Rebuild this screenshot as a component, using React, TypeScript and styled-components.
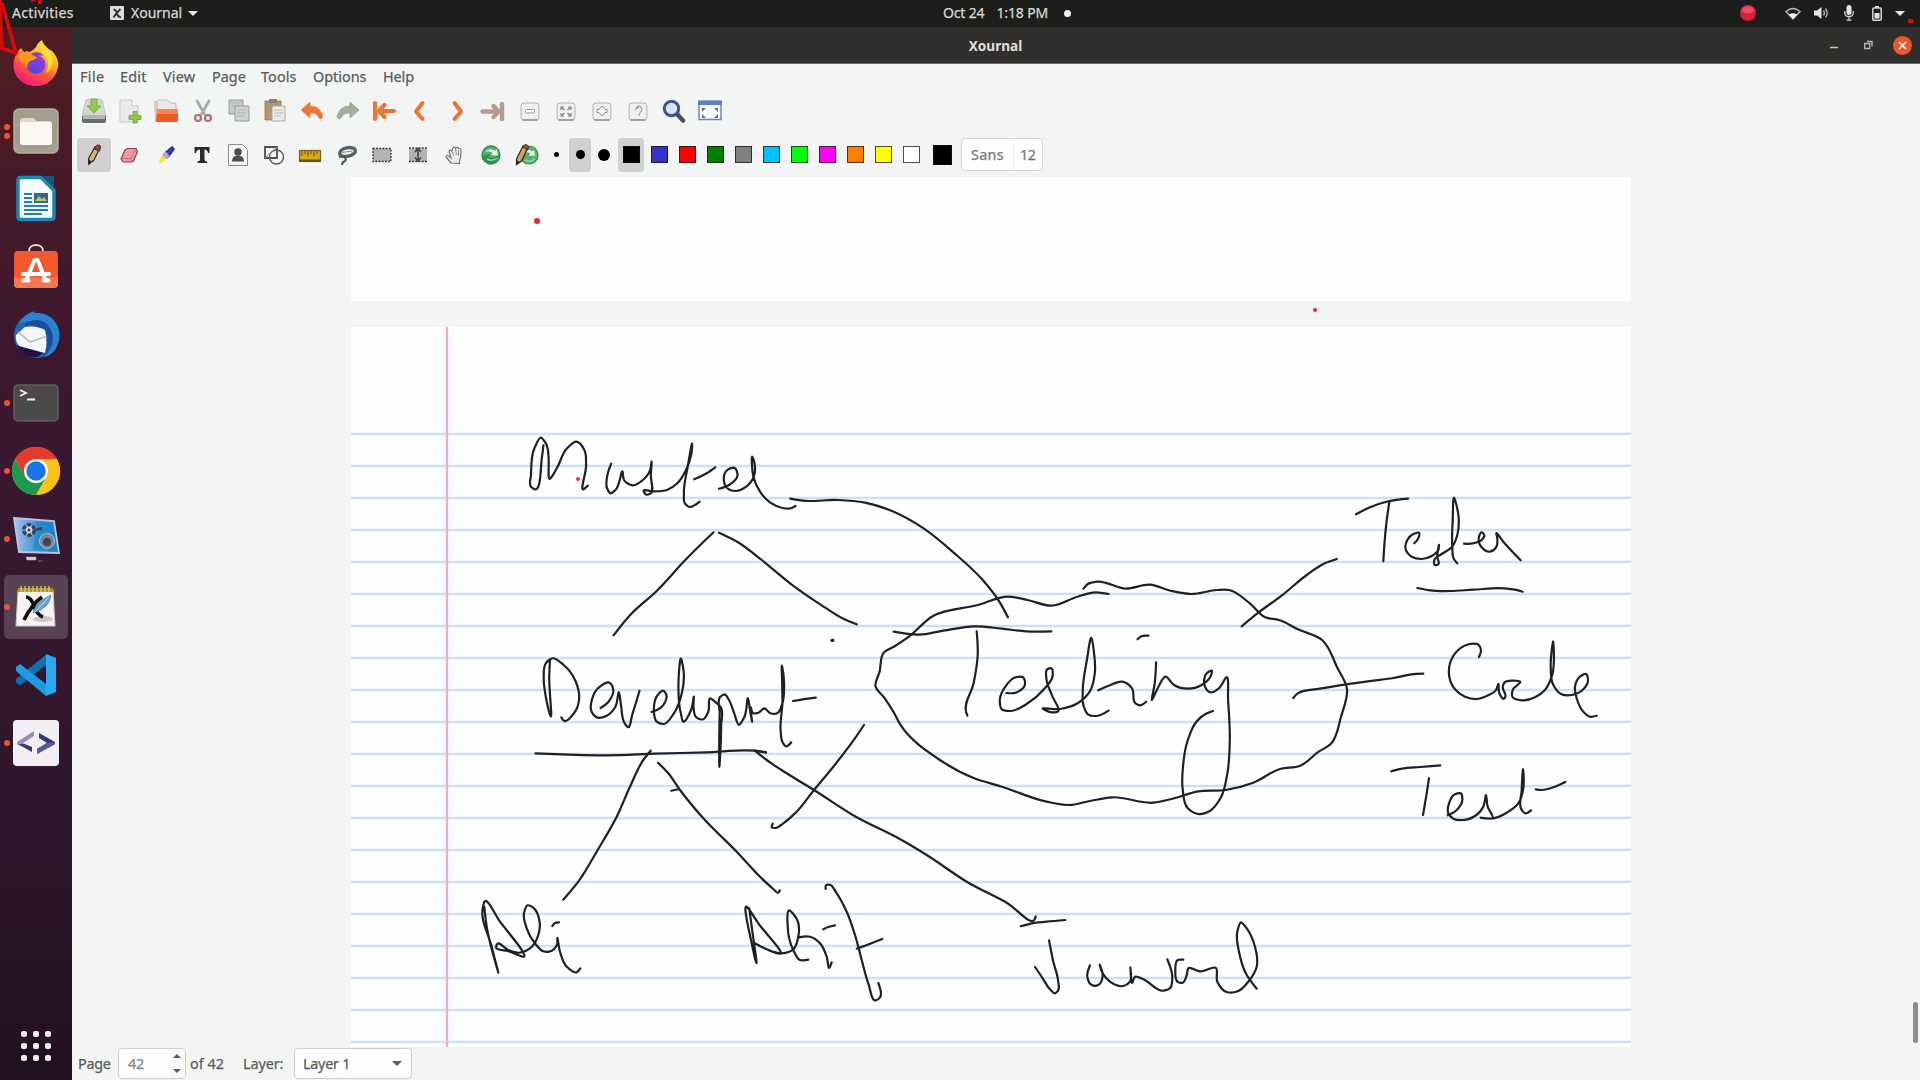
import React from 'react';
import styled, { createGlobalStyle } from 'styled-components';

const Global = createGlobalStyle`
  * { box-sizing: border-box; }
  body { margin: 0; overflow: hidden; background: #f3f5f5; }
  svg { display: block; overflow: visible; }
`;

const Screen = styled.div`
  position: relative;
  width: 1920px;
  height: 1080px;
  display: flex;
  flex-direction: column;
  font-family: "Noto Sans", "Open Sans", sans-serif;
  font-size: 14.4px;
  color: #5b5b5b;
  -webkit-text-stroke: 0.25px currentColor;
  overflow: hidden;
`;

/* ---------- top bar ---------- */
const TopBar = styled.header`
  height: 27px;
  flex: none;
  background: #1d1d1b;
  color: #d8d8d6;
  display: flex;
  align-items: center;
  font-size: 14px;
  line-height: 24px;
  padding-bottom: 1px;
  white-space: pre;
`;
const TopLeft = styled.div`
  width: 943px;
  padding-left: 12px;
  display: flex;
  align-items: center;
`;
const Activities = styled.span`
  width: 98px;
  letter-spacing: 0.35px;
`;
const AppName = styled.span`
  margin: 0 6px 0 7px;
`;
const Clock = styled.div`
  display: flex;
  align-items: center;
  letter-spacing: -0.15px;
`;
const Time = styled.span`
  width: 68px;
  margin-left: 12px;
`;
const Dot = styled.i`
  width: 7px;
  height: 7px;
  border-radius: 50%;
  background: #f2f2f2;
`;
const Tray = styled.div`
  margin-left: auto;
  padding-right: 12px;
  display: flex;
  align-items: center;
`;
const TrayItem = styled.span<{ $w: number }>`
  width: ${p => p.$w}px;
  display: flex;
  justify-content: center;
`;

/* ---------- dock ---------- */
const Body = styled.div`
  flex: 1;
  display: flex;
  min-height: 0;
`;
const DockBar = styled.nav`
  width: 72px;
  flex: none;
  padding-top: 2px;
  background: linear-gradient(#501c22 0%, #45192a 18%, #3a1830 35%, #351830 55%, #2d142c 78%, #22101f 100%);
  display: flex;
  flex-direction: column;
`;
const DockItem = styled.div<{ $active?: boolean }>`
  position: relative;
  width: 64px;
  height: 64px;
  margin: 2px 4px;
  border-radius: 5px;
  display: grid;
  place-items: center;
  background: ${p => (p.$active ? '#5a4255' : 'transparent')};
`;
const Marks = styled.div`
  position: absolute;
  left: 0;
  top: 0;
  bottom: 0;
  display: flex;
  flex-direction: column;
  justify-content: center;
  gap: 3px;
`;
const Mark = styled.i`
  width: 6px;
  height: 6px;
  border-radius: 50%;
  background: #e95530;
`;
const AppGrid = styled.div`
  margin: auto 0 19px 21px;
  display: grid;
  grid-template-columns: repeat(3, 6px);
  gap: 6px;
`;
const GridDot = styled.i`
  height: 6px;
  border-radius: 2px;
  background: #f4eef4;
`;

/* ---------- window ---------- */
const Window = styled.main`
  flex: 1;
  min-width: 0;
  display: flex;
  flex-direction: column;
  background: #f3f5f5;
`;
const TitleBar = styled.div`
  height: 37px;
  flex: none;
  background: #302f2d;
  border-bottom: 1px solid #6c6c6a;
  display: grid;
  grid-template-columns: 1fr auto 1fr;
  align-items: center;
  padding-right: 1px;
  color: #e0dfdd;
  font-weight: 700;
  font-size: 13.6px;
  -webkit-text-stroke: 0;
`;
const WinButtons = styled.div`
  display: flex;
  justify-content: flex-end;
`;
const WinButton = styled.span`
  width: 34px;
  display: flex;
  justify-content: center;
`;
const MenuBar = styled.div`
  height: 25px;
  margin-top: 1px;
  flex: none;
  padding: 0 0 2px 8px;
  display: flex;
  align-items: center;
  line-height: 22px;
`;
const MenuItem = styled.span<{ $w: number; $s?: number }>`
  width: ${p => p.$w}px;
  letter-spacing: ${p => p.$s ?? 0}px;
`;
const Toolbar = styled.div<{ $h: number }>`
  height: ${p => p.$h}px;
  flex: none;
  padding-left: 4px;
  display: flex;
  align-items: center;
`;
const Tool = styled.div<{ $w?: number; $gap?: number; $on?: boolean }>`
  width: ${p => p.$w ?? 36}px;
  height: 34px;
  margin-left: ${p => p.$gap ?? 0}px;
  border: solid transparent;
  border-width: 0 1px;
  border-radius: 4px;
  background: ${p => (p.$on ? '#d0d0d0' : 'transparent')};
  background-clip: padding-box;
  display: flex;
  align-items: center;
  justify-content: center;
`;
const PenDot = styled.i<{ $d: number }>`
  width: ${p => p.$d}px;
  height: ${p => p.$d}px;
  border-radius: 50%;
  background: #000;
`;
const Swatch = styled.i<{ $c: string; $big?: boolean }>`
  width: ${p => (p.$big ? 19 : 17)}px;
  height: ${p => (p.$big ? 20 : 17)}px;
  background: ${p => p.$c};
  border: 1.5px solid rgba(20, 20, 20, 0.75);
`;
const FontButton = styled.div`
  margin-left: 4px;
  width: 82px;
  height: 33px;
  border: 1px solid #d4d4d4;
  border-radius: 4px;
  background: #fefefe;
  display: flex;
  align-items: center;
  color: #77777a;
`;
const FontName = styled.span`
  width: 52px;
  height: 28px;
  line-height: 28px;
  padding-left: 9px;
  letter-spacing: 0.3px;
  border-right: 1px solid #f4f0f0;
`;
const FontSize = styled.span`
  padding-left: 6px;
  letter-spacing: -0.6px;
`;

/* ---------- canvas ---------- */
const Canvas = styled.section`
  flex: 1;
  min-height: 0;
  display: flex;
`;
const Pages = styled.div`
  width: 1280px;
  margin-left: 279px;
  display: flex;
  flex-direction: column;
  gap: 26px;
  overflow: hidden;
`;
const Paper = styled.div<{ $h: number }>`
  height: ${p => p.$h}px;
  flex: none;
  background: #fefefe;
`;
const ScrollTrack = styled.div`
  margin-left: auto;
  padding: 825px 2px 0 0;
`;
const Thumb = styled.div`
  width: 5px;
  height: 41px;
  border-radius: 3px;
  background: #8b8d8e;
`;

/* ---------- status ---------- */
const Status = styled.footer`
  height: 33px;
  flex: none;
  display: flex;
  align-items: center;
  padding-left: 6px;
`;
const Label = styled.span<{ $w: number; $s?: number; $pad?: number }>`
  width: ${p => p.$w}px;
  padding-left: ${p => p.$pad ?? 0}px;
  white-space: nowrap;
  letter-spacing: ${p => p.$s ?? 0}px;
`;
const Field = styled.div<{ $w: number }>`
  width: ${p => p.$w}px;
  height: 31px;
  border: 1px solid #d0cfce;
  border-radius: 4px;
  background: #fefefe;
  display: flex;
  align-items: center;
  justify-content: space-between;
  padding: 0 9px 0 8px;
  letter-spacing: -0.25px;
`;
const Spinner = styled(Field)`
  padding: 0 0 0 9px;
  color: #858585;
`;
const Arrows = styled.div`
  width: 16px;
  height: 29px;
  background: #f8f8f8;
  border-radius: 0 3px 3px 0;
  display: flex;
  flex-direction: column;
  justify-content: space-around;
  align-items: center;
`;

const Annotations = styled.svg`
  position: absolute;
  left: 0;
  top: 0;
  pointer-events: none;
`;

/* ---------- ink ---------- */
type Group = { x: number; y: number; sx: number; strokes: string[] };

const ink: Group[] = [
  {
    x: 500, y: 420, sx: 2.904,
    strokes: [
      '126,76 122,110 97,206 90,200 90,165 100,85 120,53 133,70 147,175 165,145 195,85 222,65 245,90 250,135 244,207 255,197',
      '323,131 312,165 311,205 321,220 335,210 356,155 360,180 385,196 415,180 436,150 440,125 438,165 435,222 425,224 417,212 445,214 485,210 515,190 540,150 556,100 558,72 545,140 534,220 537,250 548,260 580,245',
      '564,178 600,160 625,142',
      '636,206 665,195 690,165 682,144 660,150 650,180 660,205 685,213 715,200 737,170 740,135 733,111 736,170 755,215 785,248 820,264 845,265 858,258',
      '843,236 880,242 980,240 1060,248 1140,274 1230,325 1320,400 1400,478 1450,545 1475,592',
      '620,337 540,418 455,513 380,583 330,646',
      '636,338 690,366 760,420 850,496 930,553 1000,598 1036,613',
      '965,662 967,660',
      '145,722 143,770 147,888 133,830 127,775 133,730 152,715 185,735 220,785 230,830 218,875 185,902 178,892',
      '292,864 315,845 329,810 318,788 290,800 268,835 266,875 280,892 310,887 335,860 345,816 352,860 362,910 371,921 385,880 405,812',
      '440,876 470,860 483,825 474,812 458,825 447,870 455,905 475,912 505,880 528,820 534,765 526,716 518,800 525,880 532,905 555,870 563,830 562,860 570,892 590,898 605,875 610,835 630,850 640,860 642,920 637,1040 638,880 640,830 652,823 665,840 680,880 694,914 710,890 720,835 726,870 732,905 728,862 735,880 750,878 768,865 785,880 805,880 820,850 825,790 819,738 820,850 815,930 822,970 830,979 846,967',
      '851,843 880,838 917,833',
      '103,1000 200,1004 310,1006 450,1001 600,997 740,992 772,996',
    ],
  },
  {
    x: 840, y: 540, sx: 2.904,
    strokes: [
      '780,162 742,157 690,170 615,197 545,180 488,170 400,195 270,228 200,290 160,318 127,338 115,395 103,438 130,475 155,515 177,557 290,660 390,715 470,740 600,785 665,795 725,783 790,772 910,788 970,775 1040,754 1120,750 1200,728 1280,686 1335,678 1390,635 1425,612 1455,530 1472,445 1445,385 1400,300 1330,268 1275,240 1235,232 1190,190 1130,150 1095,150 1020,162 960,152 900,134 830,146 745,125 720,132 707,146',
      '156,275 230,284 300,272 390,259 470,266 540,274 614,274',
      '397,274 400,345 388,430 366,515 370,527',
      '483,459 510,458 537,435 532,412 510,412 480,440 464,485 470,508 495,513 545,490 590,450 618,405 614,385 602,388 600,420 615,465 632,515 615,517 589,506 640,507 690,490 725,455 740,400 738,340 730,294 717,360 705,450 708,500 720,523 745,528 780,512',
      '750,451 780,437 820,425 848,445 858,490 870,496 889,485',
      '864,298 875,289 896,287',
      '918,367 914,430 906,480 925,440 945,410 970,435 1010,446 1050,435 1078,405 1080,392 1065,400 1060,440 1075,457 1100,445 1122,412 1127,480 1132,600 1125,700 1105,775 1075,812 1040,822 1010,805 995,745 996,680 1010,600 1035,545 1060,523 1083,513',
    ],
  },
  {
    x: 1220, y: 460, sx: 3,
    strokes: [
      '408,163 450,142 505,124 564,116',
      '508,126 498,200 490,304',
      '583,250 595,235 597,218 580,222 562,240 557,268 575,290 605,297 635,288 655,270 657,255 652,290 655,313 645,315 643,300 665,282 695,262 712,225 716,175 702,113 698,180 697,260 702,298 712,310',
      '732,251 760,250 785,240 793,225 785,217 776,235 785,262 810,275 828,262 832,235 829,220 850,245 902,301',
      '592,384 630,391 690,393 760,389 850,385 885,389 908,395',
      '65,499 115,458 190,403 260,345 310,312 350,297',
      '220,714 228,704 300,686 378,673 460,662 520,654 575,643 610,641',
      '777,591 783,570 775,554 750,552 715,570 690,610 688,650 705,688 735,710 770,717 800,708 828,690 835,672 838,700 852,716 856,710 848,680 853,668 885,662 900,665 878,690 878,712 905,721 945,712 975,690 995,650 999,545 992,620 1000,675 1025,703 1055,705 1090,688 1104,660 1098,642 1080,650 1065,680 1070,715 1090,755 1110,770 1130,767',
      '514,934 545,926 600,921 661,916',
      '627,954 620,1000 609,1065',
      '683,1066 710,1050 727,1020 722,1000 705,1003 687,1030 685,1060 700,1076 730,1080 765,1068 790,1040 798,1005 803,1040 818,1074 782,1073 820,1075 860,1058 895,1030 910,985 909,928 905,990 905,1050 915,1060 933,1051',
      '947,988 965,990 1000,982 1036,966',
    ],
  },
  {
    x: 460, y: 740, sx: 3,
    strokes: [
      '572,32 550,60 510,140 470,230 410,335 355,425 310,479',
      '594,68 625,100 660,150 730,235 830,335 900,410 940,447 955,458 959,451',
      '634,152 657,147',
      '1212,-45 1180,2 1120,80 1062,150 1010,215 970,250 945,264 935,262 938,251',
      '887,34 920,60 980,100 1062,150 1190,232 1310,292 1400,345 1520,425 1640,488 1725,536 1727,529',
      '918,38 885,32',
      '73,500 80,560 115,697 95,620 68,505 73,485 120,545 188,650 150,635 108,620 112,612 145,630 180,638 210,625 235,585 238,540 222,505 203,496 192,520 200,565 225,610 250,634 275,632 292,610 292,595 300,635 320,680 350,697 361,685',
      '277,558 285,549 297,547',
      '868,505 875,560 889,668 875,610 860,500 895,550 958,641 925,630 885,610 920,628 965,640 1000,628 1015,590 1012,540 987,511 983,560 1000,630 1020,660 1045,659',
      '1017,592 1050,590 1080,610 1100,650 1108,683 1115,667',
      '1090,568 1105,561 1125,556',
      '1097,447 1098,436 1108,434 1130,460 1160,515 1185,585 1205,660 1225,730 1248,781 1260,772 1255,729',
      '1190,626 1215,617 1267,597',
    ],
  },
  {
    x: 880, y: 740, sx: 3,
    strokes: [
      '422,559 455,550 500,545 556,540',
      '507,601 520,665 534,720 534,752 526,760 510,748 490,718 465,681',
      '630,676 622,710 635,735 655,735 668,705 659,674 668,700 690,725 730,738 750,725 751,682 757,728 765,710 790,718 850,752 870,745 877,715 862,658',
      '910,659 893,660 886,690 895,727 908,728 920,705 925,685 960,694 1008,684 1012,725 1040,756 1075,753 1105,725 1130,680 1125,620 1100,565 1083,547 1072,575 1078,640 1095,695 1130,746',
    ],
  },
];

/** Smooths a list of pen samples into a cubic path. */
function smooth(g: Group, stroke: string): string {
  const p = stroke.split(' ').map(s => {
    const [a, b] = s.split(',').map(Number);
    return [g.x + a / g.sx, g.y + b / 3];
  });
  const dist = (q: number[], r: number[]) => Math.hypot(r[0] - q[0], r[1] - q[1]);
  // Tangent at b: weighted by the chord lengths, and shrinking at a cusp.
  const tangent = (a: number[], b: number[], c: number[]) => {
    const l1 = dist(a, b);
    const l2 = dist(b, c);
    if (!l1 || !l2) return [0, 0];
    const ux = ((b[0] - a[0]) / l1) * l2 + ((c[0] - b[0]) / l2) * l1;
    const uy = ((b[1] - a[1]) / l1) * l2 + ((c[1] - b[1]) / l2) * l1;
    return [ux / (l1 + l2), uy / (l1 + l2)];
  };
  let d = `M${p[0][0].toFixed(1)} ${p[0][1].toFixed(1)}`;
  for (let i = 0; i < p.length - 1; i++) {
    const b = p[i];
    const c = p[i + 1];
    const t1 = tangent(p[Math.max(0, i - 1)], b, c);
    const t2 = tangent(b, c, p[Math.min(p.length - 1, i + 2)]);
    const k = dist(b, c) / 3;
    d += `C${(b[0] + t1[0] * k).toFixed(1)} ${(b[1] + t1[1] * k).toFixed(1)} ${(c[0] - t2[0] * k).toFixed(1)} ${(c[1] - t2[1] * k).toFixed(1)} ${c[0].toFixed(1)} ${c[1].toFixed(1)}`;
  }
  return d;
}

const rules = Array.from({ length: 20 }, (_, i) => 434 + i * 32);

const RuledPage = () => (
  <svg width="1280" height="720" viewBox="351 327 1280 720">
    {rules.map(y => (
      <path key={y} d={`M351 ${y}H1631`} stroke="#cbe1f5" strokeWidth="2.400" />
    ))}
    <path d="M447 327V1047" stroke="#f2abd9" strokeWidth="2.400" />
    <g fill="none" stroke="#202022" strokeWidth="2.200" strokeLinecap="round" strokeLinejoin="round">
      {ink.map((g, i) => g.strokes.map((s, j) => <path key={`${i}-${j}`} d={smooth(g, s)} />))}
      <path d="M832 640.300h.8" strokeWidth="3.200" />
    </g>
  </svg>
);

/* ---------- dock icons ---------- */
const I = ({ s = 48, v = 48, children }: { s?: number; v?: number; children: React.ReactNode }) => (
  <svg width={s} height={s} viewBox={`0 0 ${v} ${v}`} fill="none">{children}</svg>
);

const Firefox = () => (
  <I>
    <defs>
      <linearGradient id="ff1" x1=".8" y1="0" x2=".25" y2="1">
        <stop offset="0" stopColor="#fff44f" /><stop offset=".35" stopColor="#ffb028" />
        <stop offset=".62" stopColor="#ff5a35" /><stop offset="1" stopColor="#f5108a" />
      </linearGradient>
      <linearGradient id="ff2" x1=".8" y1="0" x2=".3" y2="1">
        <stop offset="0" stopColor="#a63ad8" /><stop offset="1" stopColor="#4a4ae0" />
      </linearGradient>
    </defs>
    <path d="M9 9c1 1 2 3 3 4 2-1 4-1 6 0 3-2 5-4 6-5 1-3 3-5 6-7 1 5 5 7 8 10 1 0 2 1 2 1 5 5 7 11 6 16-2 12-11 19-22 19C11 47 1 38 1.500 25c0-5 2-9 4-11 0-2 2-4 3.500-5z" fill="url(#ff1)" />
    <circle cx="24" cy="25.500" r="9.500" fill="url(#ff2)" />
    <path d="M5 17c4-4 8-5 12-3 3 1 4 3 8 4-1 3-5 3-7 4-2 2-3 4-3 7-3-3-5-6-10-12z" fill="#ff9421" />
    <path d="M30 2c2 6 8 8 10 15 2 8-1 14-6 17 3-7 3-13-2-18-3-3-6-8-2-14z" fill="#ffe03a" opacity=".85" />
    <path d="M19 15c4-3 10-2 13 2-4-1-6 0-7 1z" fill="#7a42c8" />
  </I>
);
const Files = () => (
  <I>
    <rect x="2" y="2" width="44" height="44" rx="5" fill="#a39d8e" stroke="#b7b1a5" strokeWidth="1.500" />
    <path d="M8 14q0-3 3-3h10q2 0 3 3h13q3 0 3 3v18q0 3-3 3H11q-3 0-3-3z" fill="#ded8ca" />
    <rect x="8" y="15" width="32" height="23" rx="3" fill="#fbf8f2" />
  </I>
);
const Writer = () => (
  <I>
    <path d="M9 3h20l13 13v26q0 3-3 3H9q-3 0-3-3V6q0-3 3-3z" fill="#f4fafd" />
    <path d="M9 3h20l13 13v26q0 3-3 3H9q-3 0-3-3V6q0-3 3-3z" transform="translate(0 -.5)" stroke="#1f86b4" strokeWidth="3.500" />
    <path d="M31 1h11v12z" fill="#15587c" />
    <g stroke="#2580ab" strokeWidth="2">
      <path d="M12 19h8M12 23h8M12 27h8M12 31h24M12 35h24M12 39h18" />
    </g>
    <rect x="22" y="18" width="14" height="10" fill="#2b6d92" />
    <path d="M23 26l4-5 3 3 2-2 3 4z" fill="#c9c06a" />
  </I>
);
const Software = () => (
  <I>
    <path d="M17 11V8c0-8 14-8 14 0v3" stroke="#f1d9c6" strokeWidth="2" />
    <rect x="2" y="8" width="44" height="37" rx="4" fill="#f3592c" />
    <path d="M2 34h44v7q0 4-4 4H6q-4 0-4-4z" fill="#f7754c" />
    <path d="M14 38l8.500-21h3L34 38" stroke="#fff" strokeWidth="4" />
    <path d="M11 31h26M11.500 37.500h5M31.500 37.500h5" stroke="#fff" strokeWidth="4" strokeLinecap="round" />
  </I>
);
const Thunderbird = () => (
  <I>
    <circle cx="24.500" cy="24.500" r="22.500" fill="#2566ba" />
    <path d="M7 12C14 2 20 1 23 0c-2 2 0 2 3 2 14 0 24 14 21 27-2 10-8 16-15 17 6-6 8-14 5-22-4-12-18-16-30-12z" fill="#2a83d0" />
    <path d="M12 15c7-9 22-8 27 4 5 11 0 22-9 27 4-8 5-16 3-21-3-9-12-13-21-10z" fill="#1c4d9c" />
    <path d="M5 34l26 8-5 4C15 47 8 43 5 34z" fill="#20133f" />
    <path d="M4 24l9-8q11-2 20 3 3 12 0 23L7 35q-4-5-3-11z" fill="#f5f6fa" />
    <path d="M6 21l12 10 17-6" stroke="#a7adc0" strokeWidth="1.200" />
  </I>
);
const Terminal = () => (
  <I>
    <rect x="2" y="6" width="44" height="36" rx="4" fill="#4b4a48" stroke="#605f5d" strokeWidth="1.500" />
    <path d="M8 11l6 3-6 3M15 20.500h8" stroke="#f1f1f1" strokeWidth="1.800" />
  </I>
);
const Chrome = () => (
  <I>
    <circle cx="24" cy="24" r="24" fill="#fbc116" />
    <path d="M3.200 12A24 24 0 0 0 24 48L34.400 30 24 24 13.600 30z" fill="#1f9950" />
    <path d="M24 12h20.800A24 24 0 0 1 24 48L34.400 30z" fill="#fbc116" />
    <path d="M3.200 12L13.600 30 24 24V12h20.800A24 24 0 0 0 3.200 12z" fill="#e33b2e" />
    <circle cx="24" cy="24" r="12" fill="#fff" />
    <circle cx="24" cy="24" r="9.700" fill="#1a74e6" />
  </I>
);
const Recorder = () => (
  <I>
    <defs>
      <linearGradient id="rc" x1="0" x2="1"><stop offset="0" stopColor="#a7c4ea" /><stop offset=".5" stopColor="#3f93d4" /><stop offset="1" stopColor="#1a7fc3" /></linearGradient>
    </defs>
    <path d="M2 3l40 3 5 32-40-1z" fill="url(#rc)" stroke="#bfc3dc" strokeWidth="1.800" />
    <path d="M25 7l15 1 5 27-24-1z" fill="#1688cc" opacity=".6" />
    <circle cx="17" cy="15" r="5.200" fill="#cdd8ea" stroke="#33415d" strokeWidth="3.500" strokeDasharray="4.200 1.240" />
    <circle cx="17" cy="15" r="1.500" fill="#33415d" />
    <path d="M23 14l7-2v3l-6 1z" fill="#33415d" />
    <circle cx="35" cy="26" r="7.500" fill="#79838f" stroke="#b4bec8" />
    <circle cx="35" cy="27" r="4" fill="#3c4654" />
    <path d="M14 42h10v3H15zM26 46h5" fill="#d8d4de" stroke="#aaa5b3" strokeWidth=".6" />
  </I>
);
const XournalIcon = () => (
  <I>
    <path d="M6 7h35l2 36H4z" fill="#f5f4f2" stroke="#c8c4c4" />
    <path d="M6 5h35v4H6z" fill="#ab932a" />
    <path d="M9 3v6M13 3v6M17 3v6M21 3v6M25 3v6M29 3v6M33 3v6M37 3v6" stroke="#e0cf5e" strokeWidth="1.300" />
    <ellipse cx="31" cy="36" rx="10" ry="3" fill="#c9c8c6" />
    <path d="M14 14q5 0 8 9t9 11M30 14Q20 21 12 37" stroke="#0e0e0e" strokeWidth="3.600" />
    <path d="M21 30q2-9 9-13l9-5q-1 7-5 11l-7 5z" fill="#6ba2cf" stroke="#3a6a94" strokeWidth=".6" />
    <path d="M20 32L37 14" stroke="#d6e6f2" strokeWidth=".8" />
  </I>
);
const VsCode = () => (
  <I>
    <path d="M4 31l4 3.500L35 13V3L4 28z" fill="#0d72b4" />
    <path d="M4 16l4-3 26 20v12L4 20z" fill="#1f9be3" />
    <path d="M34 3l10 4v34l-10 4z" fill="#2ba9ee" />
  </I>
);
const CodeApp = () => (
  <I>
    <rect x="1" y="1" width="46" height="46" rx="4" fill="#f1eff1" />
    <path d="M22 12L5 23v2l14 7v-4l-8-4 11-7z" fill="#9391b8" />
    <path d="M12 25l8 3v5L6 25z" fill="#3b3678" />
    <path d="M27 14l16 9v2L25 35v-5l10-6-8-5z" fill="#3b3678" />
    <path d="M35 24l8-1v2L25 35v-5z" fill="#5b5894" />
  </I>
);

/* ---------- toolbar icons ---------- */
const T = ({ children }: { children: React.ReactNode }) => <I s={24} v={24}>{children}</I>;
const orange = '#ee7436';

const Save = () => (
  <T><path d="M3 4q0-4 4-4h10q4 0 4 4l3 13H0z" fill="#d3d4d3" stroke="#b4b4b4" strokeWidth=".6" /><path d="M0 17h24v5q0 2-2 2H2q-2 0-2-2z" fill="#6a6c6c" /><path d="M1 16h22v4H1z" fill="#b4b6b6" /><path d="M9 0h6v7h4l-7 7-7-7h4z" fill="#8fc94a" stroke="#6aa636" strokeWidth=".7" /></T>
);
const NewPage = () => (
  <T><path d="M2 1h12l6 6v16H2z" fill="#e9eae9" stroke="#c6c7c6" /><path d="M14 1v6h6" fill="#fafafa" stroke="#c6c7c6" /><path d="M15 12.500h4v4h4v4h-4v3.500h-4v-3.500h-4v-4h4z" fill="#93c952" stroke="#6ba238" strokeWidth=".8" /></T>
);
const Open = () => (
  <T><path d="M3 1h10l4 3h5v10H3z" fill="#ebe8e6" stroke="#c9bdb6" /><path d="M0 2h4v20H1z" fill="#e6c4b4" /><path d="M3 12q0-2 2-2h17q2 0 2 2v9q0 2-2 2H3q-2 0-1-2z" fill="#ee5a22" /><path d="M3 12q0-2 2-2h17q2 0 2 2v3H3z" fill="#f58556" /></T>
);
const Cut = () => (
  <T><path d="M5.500 1l8.500 15M18.500 1L10 16" stroke="#a9acac" strokeWidth="2.800" /><circle cx="7" cy="19" r="3" stroke="#a9707a" strokeWidth="2.200" /><circle cx="17" cy="19" r="3" stroke="#a9707a" strokeWidth="2.200" /></T>
);
const Copy = () => (
  <T><g stroke="#979a9a"><path d="M2 1h14v14H2z" fill="#c9cbca" /><path d="M8 7h14v15H8z" fill="#d2d4d3" /></g><path d="M4 4h10M4 7h3M10 11h10M10 14h10M10 17h8" stroke="#aeb1b0" /></T>
);
const Paste = () => (
  <T><path d="M2 2h16v19H2z" fill="#b79370" stroke="#967455" strokeWidth=".8" /><path d="M6 0h8v4H6z" fill="#80827f" /><path d="M9 7h13v15H9z" fill="#ececeb" stroke="#a5a5a5" /><path d="M11 11h9M11 14h9M11 17h7" stroke="#b8b8b8" /></T>
);
const Undo = () => (
  <T><path d="M1 11L10 3v4c8 0 11 4 13 11-1 2-3 2-4 1-2-4-4-5-9-5v5z" fill={orange} stroke="#f0905c" strokeWidth=".8" /></T>
);
const Redo = () => (
  <T><path d="M23 11L14 3v4C6 7 3 11 1 18c1 2 3 2 4 1 2-4 4-5 9-5v5z" fill="#a6ae98" stroke="#98a08c" strokeWidth=".8" /></T>
);
const First = () => (
  <T><path d="M3 4v16M8 12h14M12.500 6L7 12l5.500 6" stroke={orange} strokeWidth="4.200" strokeLinecap="round" strokeLinejoin="round" /></T>
);
const Prev = () => <T><path d="M14.500 4L8 12.500 14.500 20" stroke={orange} strokeWidth="4" strokeLinecap="round" strokeLinejoin="round" /></T>;
const Next = () => <T><path d="M10.500 4l6.500 8.500L10.500 20" stroke={orange} strokeWidth="4" strokeLinecap="round" strokeLinejoin="round" /></T>;
const Last = () => (
  <T><path d="M22 5v15M2.500 12.500H16M13.500 7l5 5.500-5 5.500" stroke="#b79a8e" strokeWidth="4.400" strokeLinecap="round" strokeLinejoin="round" /></T>
);
const Key = ({ children }: { children: React.ReactNode }) => (
  <T><rect x="3" y="4" width="18" height="17" rx="3" fill="#efefee" stroke="#b3b3b2" /><path d="M5 21h14" stroke="#8f8f8e" strokeWidth="1.500" strokeLinecap="round" />{children}</T>
);
const Magnifier = () => (
  <T><path d="M15 15l6 6.500" stroke="#4c4f58" strokeWidth="4.500" strokeLinecap="round" /><circle cx="9.500" cy="9.500" r="7.200" fill="#dbe4ef" stroke="#3c5599" strokeWidth="3" /></T>
);
const FitPage = () => (
  <T><rect x="1" y="2.500" width="22" height="18" fill="#fcfcfc" stroke="#6986b8" strokeWidth="1.500" /><path d="M.2 1.500h23.600v4.500H.2z" fill="#5b80c0" /><path d="M4 9h4l-4 4zM20 9h-4l4 4zM4 19h4l-4-4zM20 19h-4l4-4z" fill="#6c6e72" /></T>
);
const Pencil = () => (
  <T><path d="M6.500 15.500L13 4l4.500 1.500-5.500 11.500L7 21z" fill="#d9b27c" stroke="#3a3026" strokeWidth="1.300" /><path d="M13 4l2.500-2q3-.5 3 2l-1 4-5-2z" fill="#a2453d" stroke="#33201c" /><path d="M6.500 16l3 2.500L6 22.500z" fill="#222" /></T>
);
const Eraser = () => (
  <T><path d="M9.500 5.500H18l1.500 3-4 9.500-2 1H5l-2-3 4-9z" fill="#ee9a9f" stroke="#8a4146" strokeWidth="1.200" /><path d="M3.500 15.500h9l2 3M12.500 15.500L17.500 6" stroke="#c66e74" /></T>
);
const Marker = () => (
  <T><path d="M12 9l6-5 2 2-5 7z" fill="#3b3bd4" stroke="#27277f" strokeWidth="1.500" /><path d="M12 9l3.500 4-3 3-4-4z" fill="#aeb1d9" stroke="#8588b5" /><path d="M8.500 12l4 4-5 4H5l1-4z" fill="#f4e92e" /></T>
);
const TextTool = () => (
  <T><path d="M4.500 4h15v6h-1.500q-.5-3.500-3.500-3.500v10q0 2 2.500 2V20H7.500v-1.500q2.500 0 2.500-2v-10Q6.500 6.500 6 10H4.500z" fill="#2a2a2a" /></T>
);
const ImageTool = () => (
  <T><path d="M2.500 1.500h14l5 5v16h-19z" fill="#f5f6f6" stroke="#8b8d8d" /><circle cx="12" cy="9" r="3.700" fill="#4a4c4c" /><path d="M6 18.500q0-6 6-6t6 6z" fill="#4a4c4c" /></T>
);
const Shapes = () => (
  <T><path d="M3 4h12v11H3z" stroke="#4e5050" strokeWidth="1.800" /><circle cx="14.500" cy="14" r="7" stroke="#5d5f5f" strokeWidth="1.500" /><path d="M3 15L15 4" stroke="#8b8d8d" /></T>
);
const Ruler = () => (
  <T><rect x="1.500" y="7.500" width="21" height="11" fill="#d9a916" stroke="#77601a" strokeWidth="1.200" /><path d="M1.500 17.500h21" stroke="#6b5315" strokeWidth="2" /><path d="M4 8v5M7 8v3M10 8v5M13 8v3M16 8v5M19 8v3" stroke="#65501a" /></T>
);
const Lasso = () => (
  <T><ellipse cx="13.500" cy="9" rx="8" ry="4.200" transform="rotate(-12 13.500 9)" stroke="#5c5f61" strokeWidth="3.400" /><path d="M5 14q2-1 5 0 3 2 1 4-3 1-3 4" stroke="#55585a" strokeWidth="2.200" /><path d="M8 9.500l10-1.500" stroke="#8b8d8f" strokeWidth="1.200" /></T>
);
const SelectRect = () => (
  <T><rect x="3" y="5.500" width="18" height="13" fill="#b2b4b4" stroke="#2d2d2d" strokeWidth="1.300" strokeDasharray="1.800 1.400" /></T>
);
const VSpace = () => (
  <T><path d="M3 5.500h18v13H3z" fill="#b2b4b4" /><path d="M3 5h18M3 18.500h18" stroke="#2d2d2d" strokeWidth="1.300" strokeDasharray="1.800 1.400" /><path d="M12 6v11M9 9l3-3.500L15 9M9 14.500l3 3.500 3-3.500" stroke="#404040" strokeWidth="1.500" /></T>
);
const Hand = () => (
  <T><path d="M9 20l-5-6q0-2 3-1l2 2-2-7q1-2 2.500 0L11 5q1.500-2 2.500 0 2-1.500 3 .5 2-.5 2.500 2l-.5 7-1 3v3z" fill="#ecedec" stroke="#737575" strokeWidth="1.200" /><path d="M10 8l2 5M13.500 6l1 6M16.500 7v6" stroke="#8d8f8f" /></T>
);
const Refresh = () => (
  <T>
    <circle cx="12" cy="12" r="9" fill="#54b26c" stroke="#2b8f47" strokeWidth="1.400" />
    <path d="M3.500 13l8-2.500-2 3.500q5 3 10.500-3-1 9-8.500 9.500-6.500-.5-8-7.500z" fill="#2b9147" />
    <path d="M5.500 9.500Q11 4 15.500 8l2-2 1.500 6.500-7-.5 2-2q-4-3-8.500-.5z" fill="#eefaf0" />
    <path d="M8 16q5 3 10-1" stroke="#9bd8a8" strokeWidth="1.600" />
  </T>
);
const RefreshPencil = () => (
  <I s={28} v={28}>
    <circle cx="17" cy="14" r="9" fill="#54b26c" stroke="#2b8f47" strokeWidth="1.200" />
    <path d="M11 12q5-5 9-1.500l2-1.500 1 6-6.500-.5 2-2q-3-2-7.500-.5z" fill="#eefaf0" />
    <path d="M13 19q5 3 10-1" stroke="#9bd8a8" strokeWidth="1.600" />
    <path d="M4.500 18L11 5l4.500 2.500L9.500 20l-5 3.500z" fill="#d0a46a" stroke="#2e261e" strokeWidth="1.200" /><path d="M11 5l2.500-1.500q3 .5 3 2.500l-1 3-5-3z" fill="#9a4a38" stroke="#33201c" strokeWidth=".8" /><path d="M4.500 19l3 2-3.500 3.500z" fill="#222" />
  </I>
);

const Caret = ({ c = '#e8e8e6', w = 10, up }: { c?: string; w?: number; up?: boolean }) => (
  <svg width={w} height={w / 2} viewBox="0 0 10 5"><path d={up ? 'M0 5h10L5 0z' : 'M0 0h10L5 5z'} fill={c} /></svg>
);

const dock: { icon: React.ReactNode; marks: number; active?: boolean }[] = [
  { icon: <Firefox />, marks: 0 },
  { icon: <Files />, marks: 2 },
  { icon: <Writer />, marks: 0 },
  { icon: <Software />, marks: 0 },
  { icon: <Thunderbird />, marks: 0 },
  { icon: <Terminal />, marks: 1 },
  { icon: <Chrome />, marks: 1 },
  { icon: <Recorder />, marks: 1 },
  { icon: <XournalIcon />, marks: 1, active: true },
  { icon: <VsCode />, marks: 0 },
  { icon: <CodeApp />, marks: 1 },
];

const menus: [string, number, number][] = [
  ['File', 40, 0.4], ['Edit', 43, 0.2], ['View', 49, 0.2], ['Page', 49, 0], ['Tools', 52, 0.1], ['Options', 70, 0], ['Help', 40, -0.1],
];

const fileTools: [React.ReactNode, number][] = [
  [<Save />, 0], [<NewPage />, 0], [<Open />, 0], [<Cut />, 1], [<Copy />, 0], [<Paste />, 0],
  [<Undo />, 1], [<Redo />, 0], [<First />, 0], [<Prev />, 0], [<Next />, 0], [<Last />, 0],
  [<Key><rect x="7.500" y="10.500" width="9" height="3.500" rx="1" fill="#fff" stroke="#979796" /></Key>, 2],
  [<Key><path d="M7 11V8h3M14 8h3v3M17 14v3h-3M10 17H7v-3M7 8l3.500 3M17 8l-3.500 3M17 17l-3.500-3M7 17l3.500-3" stroke="#858584" strokeWidth="1.200" /></Key>, 0],
  [<Key><path d="M12 7l3 3.500h2v3h-2l-3 3.500-3-3.500H7v-3h2z" fill="#fff" stroke="#858584" /></Key>, 0],
  [<Key><path d="M9 11l3-3.500v2M10 10q1-3 4-2.500 3 2 1 5l-2 3v1.500" stroke="#a0a09f" strokeWidth="1.200" /></Key>, 0],
  [<Magnifier />, 0], [<FitPage />, 0],
];

const penTools: [React.ReactNode, number][] = [
  [<Pencil />, 0], [<Eraser />, 0], [<Marker />, 0], [<TextTool />, 0], [<ImageTool />, 0], [<Shapes />, 0],
  [<Ruler />, 0], [<Lasso />, 0], [<SelectRect />, 0], [<VSpace />, 0], [<Hand />, 0], [<Refresh />, 1], [<RefreshPencil />, -1],
];

const colors = ['#000000', '#3333cc', '#ff0000', '#008000', '#808080', '#00c0ff', '#00ff00', '#ff00ff', '#ff8000', '#ffff00', '#ffffff'];

export default function App() {
  return (
    <Screen>
      <Global />
      <TopBar>
        <TopLeft>
          <Activities>Activities</Activities>
          <svg width="14" height="14" viewBox="0 0 14 14" fill="none">
            <rect width="14" height="14" rx="1" fill="#dededc" />
            <path d="M3.500 3.500q2.500 0 3.500 4t4 3.500M10.500 3Q7 6 3.500 11.500" stroke="#30302e" strokeWidth="1.800" />
          </svg>
          <AppName>Xournal</AppName>
          <Caret />
        </TopLeft>
        <Clock>Oct 24<Time>1:18 PM</Time><Dot /></Clock>
        <Tray>
          <TrayItem $w={62}>
            <svg width="16" height="16" viewBox="0 0 16 16">
              <circle cx="8" cy="8" r="8" fill="#d8203f" /><ellipse cx="8" cy="5" rx="6" ry="3.500" fill="#f27180" opacity=".6" />
            </svg>
          </TrayItem>
          <TrayItem $w={28}>
            <svg width="16" height="13" viewBox="0 0 16 13" fill="none"><path d="M1 4.500Q8-1.500 15 4.500L8 12z" stroke="#bdbdbb" strokeWidth="1.400" /><path d="M4 7.500q4-2.500 8 0L8 12z" fill="#f0f0ee" /></svg>
          </TrayItem>
          <TrayItem $w={28}>
            <svg width="16" height="14" viewBox="0 0 16 14" fill="none"><path d="M1 4.500h3L8.500 1v12L4 9.500H1z" fill="#e4e4e2" /><path d="M10.500 4.500q2 2.500 0 5M12.500 2.500q3.500 4.500 0 9" stroke="#b0b0ae" strokeWidth="1.400" /></svg>
          </TrayItem>
          <TrayItem $w={27}>
            <svg width="10" height="16" viewBox="0 0 10 16" fill="none"><rect x="2.500" y="0" width="5" height="10" rx="2.500" fill="#e4e4e2" /><path d="M.8 6v2q0 3.500 4.200 3.500T9.200 8V6M5 12v3M2.500 15.200h5" stroke="#d0d0ce" strokeWidth="1.300" /></svg>
          </TrayItem>
          <TrayItem $w={30}>
            <svg width="10" height="15" viewBox="0 0 10 15" fill="none"><path d="M3 0h4v2H3z" fill="#d8d8d6" /><rect x=".8" y="2" width="8.400" height="12.200" rx="1" stroke="#d8d8d6" strokeWidth="1.500" /><path d="M2.500 7h5v5.500h-5z" fill="#e4e4e2" /></svg>
          </TrayItem>
          <TrayItem $w={16}><Caret /></TrayItem>
        </Tray>
      </TopBar>
      <Body>
        <DockBar>
          {dock.map((d, i) => (
            <DockItem key={i} $active={d.active}>
              <Marks>{Array.from({ length: d.marks }, (_, k) => <Mark key={k} />)}</Marks>
              {d.icon}
            </DockItem>
          ))}
          <AppGrid>{Array.from({ length: 9 }, (_, k) => <GridDot key={k} />)}</AppGrid>
        </DockBar>
        <Window>
          <TitleBar>
            <span />
            <span>Xournal</span>
            <WinButtons>
              <WinButton><svg width="8" height="18"><path d="M0 11.500h8" stroke="#c8c8c6" strokeWidth="1.500" /></svg></WinButton>
              <WinButton>
                <svg width="9" height="18" viewBox="0 0 9 18" fill="none" stroke="#bababa" strokeWidth="1.300"><path d="M.7 7.500h5v5h-5z" /><path d="M3 5.500h5v5" /></svg>
              </WinButton>
              <WinButton>
                <svg width="19" height="19" viewBox="0 0 19 19" fill="none"><circle cx="9.500" cy="9.500" r="9.500" fill="#ec5829" /><path d="M6 6l7 7M13 6l-7 7" stroke="#fff" strokeWidth="1.700" /></svg>
              </WinButton>
            </WinButtons>
          </TitleBar>
          <MenuBar>{menus.map(([m, w, s]) => <MenuItem key={m} $w={w} $s={s}>{m}</MenuItem>)}</MenuBar>
          <Toolbar $h={42}>
            {fileTools.map(([icon, gap], i) => <Tool key={i} $gap={gap}>{icon}</Tool>)}
          </Toolbar>
          <Toolbar $h={45}>
            {penTools.map(([icon, gap], i) => <Tool key={i} $gap={gap} $on={i === 0}>{icon}</Tool>)}
            <Tool $w={24}><PenDot $d={5} /></Tool>
            <Tool $w={24} $on><PenDot $d={9} /></Tool>
            <Tool $w={24}><PenDot $d={12} /></Tool>
            {colors.map((c, i) => <Tool key={c} $w={28} $gap={i === 0 ? 1 : 0} $on={i === 0}><Swatch $c={c} /></Tool>)}
            <Tool $w={30} $gap={2}><Swatch $c="#000000" $big /></Tool>
            <FontButton><FontName>Sans</FontName><FontSize>12</FontSize></FontButton>
          </Toolbar>
          <Canvas>
            <Pages>
              <Paper $h={124} />
              <Paper $h={720}><RuledPage /></Paper>
            </Pages>
            <ScrollTrack><Thumb /></ScrollTrack>
          </Canvas>
          <Status>
            <Label $w={40} $s={-0.3}>Page</Label>
            <Spinner $w={68}>42<Arrows><Caret c="#5b5b5b" w={8} up /><Caret c="#5b5b5b" w={8} /></Arrows></Spinner>
            <Label $w={57} $pad={4}>of 42</Label>
            <Label $w={51} $s={-0.1}>Layer:</Label>
            <Field $w={118}>Layer 1<Caret c="#5b5b5b" w={10} /></Field>
          </Status>
        </Window>
      </Body>
      <Annotations width="1920" height="1080" viewBox="0 0 1920 1080" fill="none">
        <path d="M0 0L1.500 48L16 53L2 3" stroke="#d90a0a" strokeWidth="3.600" strokeLinejoin="round" />
        <path d="M31 0h4v1.500h-4zM38 0h4v4h-4zM1908 19h5v4h-5z" fill="#d90a0a" />
        <circle cx="537" cy="221" r="3" fill="#f0242c" />
        <circle cx="1315" cy="310" r="2" fill="#f0242c" />
        <circle cx="578" cy="479" r="2" fill="#fa3038" />
      </Annotations>
    </Screen>
  );
}
